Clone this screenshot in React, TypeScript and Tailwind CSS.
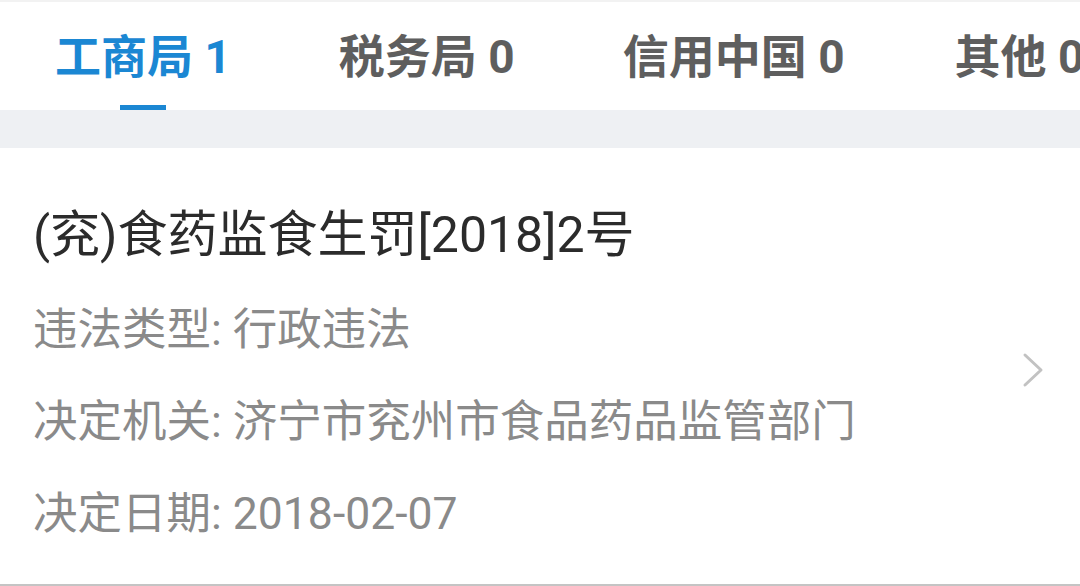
import React from 'react';

const tabs = [
  { label: '工商局', count: 1, active: true, margin: 'ml-[55px]' },
  { label: '税务局', count: 0, active: false, margin: 'ml-[108px]' },
  { label: '信用中国', count: 0, active: false, margin: 'ml-[108px]' },
  { label: '其他', count: 0, active: false, margin: 'ml-[110px]' },
];

const rows = [
  { label: '违法类型', value: '行政违法' },
  { label: '决定机关', value: '济宁市兖州市食品药品监管部门' },
  { label: '决定日期', value: '2018-02-07' },
];

const font = "font-['Roboto','Noto_Sans_CJK_SC',sans-serif]";

export default function App() {
  return (
    <div className={`w-[1080px] h-[586px] overflow-hidden flex flex-col bg-white ${font}`}>
      <div className="h-[110px] flex bg-white border-t-2 border-[#f2f2f2] whitespace-nowrap">
        {tabs.map((tab, index) => (
          <div key={index} className={`${tab.margin} shrink-0 flex flex-col items-center justify-end`}>
            <span
              className={`text-[46px] leading-[54px] font-bold ${
                tab.active ? 'text-[#1b87d3]' : 'text-[#5e5e5e]'
              }`}
            >
              {tab.label} {tab.count}
            </span>
            <div className={`mt-[21px] h-[5px] w-[46px] ${tab.active ? 'bg-[#1b87d3]' : 'bg-transparent'}`} />
          </div>
        ))}
      </div>

      <div className="h-[38px] bg-[#eef0f3]" />

      <div className="flex-1 flex items-center bg-white border-b-2 border-[#c4c4c4] pl-[33px] pr-[36px]">
        <div className="flex-1 flex flex-col gap-[40px] self-start pt-[58px]">
          <div className="text-[50px] leading-[58px] text-[#2b2b2b]">(兖)食药监食生罚[2018]2号</div>
          {rows.map((row, index) => (
            <div key={index} className="text-[44.5px] leading-[52px] text-[#8a8a8a]">
              {row.label}: {row.value}
            </div>
          ))}
        </div>
        <svg width="22" height="36" viewBox="0 0 22 36" className="mt-[8px]">
          <polyline points="3,3 19,18 3,33" fill="none" stroke="#c2c2c2" strokeWidth="3" strokeLinecap="round" strokeLinejoin="round" />
        </svg>
      </div>
    </div>
  );
}
